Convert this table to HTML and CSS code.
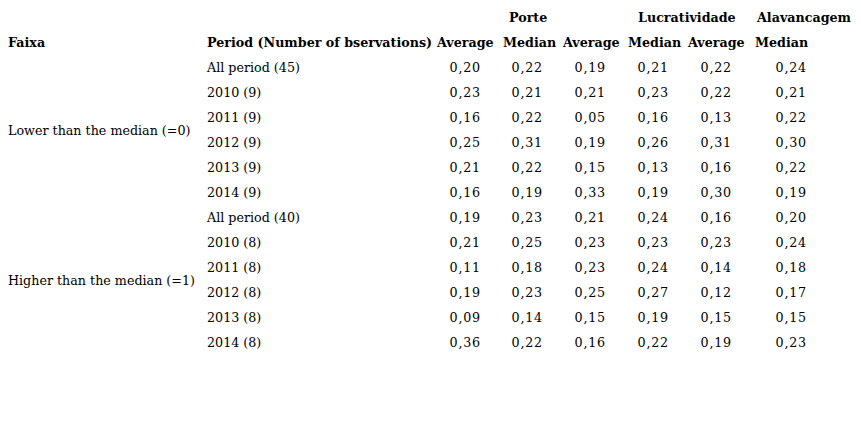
FILE: index.html
```html
<!DOCTYPE html>
<html>
<head>
<meta charset="utf-8">
<link rel="stylesheet" href="styles.css">
</head>
<body>
<table class="stats">
  <colgroup>
    <col class="c-faixa"><col class="c-period"><col class="c-n1"><col class="c-n2"><col class="c-n3"><col class="c-n4"><col class="c-n5"><col class="c-n6">
  </colgroup>
  <tr class="group">
    <th></th><th></th><th></th>
    <th class="g-porte">Porte</th>
    <th></th>
    <th class="g-lucr" colspan="2">Lucratividade</th>
    <th class="g-alav">Alavancagem</th>
  </tr>
  <tr class="head">
    <th>Faixa</th><th>Period (Number of bservations)</th>
    <th>Average</th><th>Median</th><th>Average</th><th>Median</th><th>Average</th><th>Median</th>
  </tr>
  <tr><td class="faixa" rowspan="6">Lower than the median (=0)</td><td class="per">All period (45)</td><td>0,20</td><td>0,22</td><td>0,19</td><td>0,21</td><td>0,22</td><td>0,24</td></tr>
  <tr><td class="per">2010 (9)</td><td>0,23</td><td>0,21</td><td>0,21</td><td>0,23</td><td>0,22</td><td>0,21</td></tr>
  <tr><td class="per">2011 (9)</td><td>0,16</td><td>0,22</td><td>0,05</td><td>0,16</td><td>0,13</td><td>0,22</td></tr>
  <tr><td class="per">2012 (9)</td><td>0,25</td><td>0,31</td><td>0,19</td><td>0,26</td><td>0,31</td><td>0,30</td></tr>
  <tr><td class="per">2013 (9)</td><td>0,21</td><td>0,22</td><td>0,15</td><td>0,13</td><td>0,16</td><td>0,22</td></tr>
  <tr><td class="per">2014 (9)</td><td>0,16</td><td>0,19</td><td>0,33</td><td>0,19</td><td>0,30</td><td>0,19</td></tr>
  <tr><td class="faixa" rowspan="6">Higher than the median (=1)</td><td class="per">All period (40)</td><td>0,19</td><td>0,23</td><td>0,21</td><td>0,24</td><td>0,16</td><td>0,20</td></tr>
  <tr><td class="per">2010 (8)</td><td>0,21</td><td>0,25</td><td>0,23</td><td>0,23</td><td>0,23</td><td>0,24</td></tr>
  <tr><td class="per">2011 (8)</td><td>0,11</td><td>0,18</td><td>0,23</td><td>0,24</td><td>0,14</td><td>0,18</td></tr>
  <tr><td class="per">2012 (8)</td><td>0,19</td><td>0,23</td><td>0,25</td><td>0,27</td><td>0,12</td><td>0,17</td></tr>
  <tr><td class="per">2013 (8)</td><td>0,09</td><td>0,14</td><td>0,15</td><td>0,19</td><td>0,15</td><td>0,15</td></tr>
  <tr><td class="per">2014 (8)</td><td>0,36</td><td>0,22</td><td>0,16</td><td>0,22</td><td>0,19</td><td>0,23</td></tr>
</table>
</body>
</html>
```

FILE: styles.css
```css
html, body {
  margin: 0;
  padding: 0;
  background: #ffffff;
}
body {
  padding: 5px 0 0 8px;
  font-family: "DejaVu Serif", "Liberation Serif", serif;
  font-size: 12.7px;
  color: #000000;
}
.stats {
  border-collapse: collapse;
  table-layout: fixed;
  width: 845px;
}
.c-faixa { width: 199px; }
.c-period { width: 230px; }
.c-n1 { width: 66px; }
.c-n2 { width: 60px; }
.c-n3 { width: 65px; }
.c-n4 { width: 60px; }
.c-n5 { width: 67px; }
.c-n6 { width: 98px; }
.stats tr { height: 25px; }
.stats th, .stats td {
  padding: 0;
  text-align: left;
  vertical-align: middle;
  white-space: nowrap;
  overflow: visible;
}
.stats th { font-weight: bold; }
.stats .group th { text-align: left; }
.g-porte { padding-left: 6px !important; }
.g-lucr { padding-left: 10px !important; }
.g-alav { padding-left: 2px !important; }
.stats td {
  text-align: right;
  letter-spacing: 0.8px;
}
.stats td.per, .stats td.faixa {
  text-align: left;
  letter-spacing: 0;
}
.stats td:nth-last-child(6) { padding-right: 22px; }
.stats td:nth-last-child(5) { padding-right: 20px; }
.stats td:nth-last-child(4) { padding-right: 22px; }
.stats td:nth-last-child(3) { padding-right: 19px; }
.stats td:nth-last-child(2) { padding-right: 23px; }
.stats td:nth-last-child(1) { padding-right: 46px; }
```
